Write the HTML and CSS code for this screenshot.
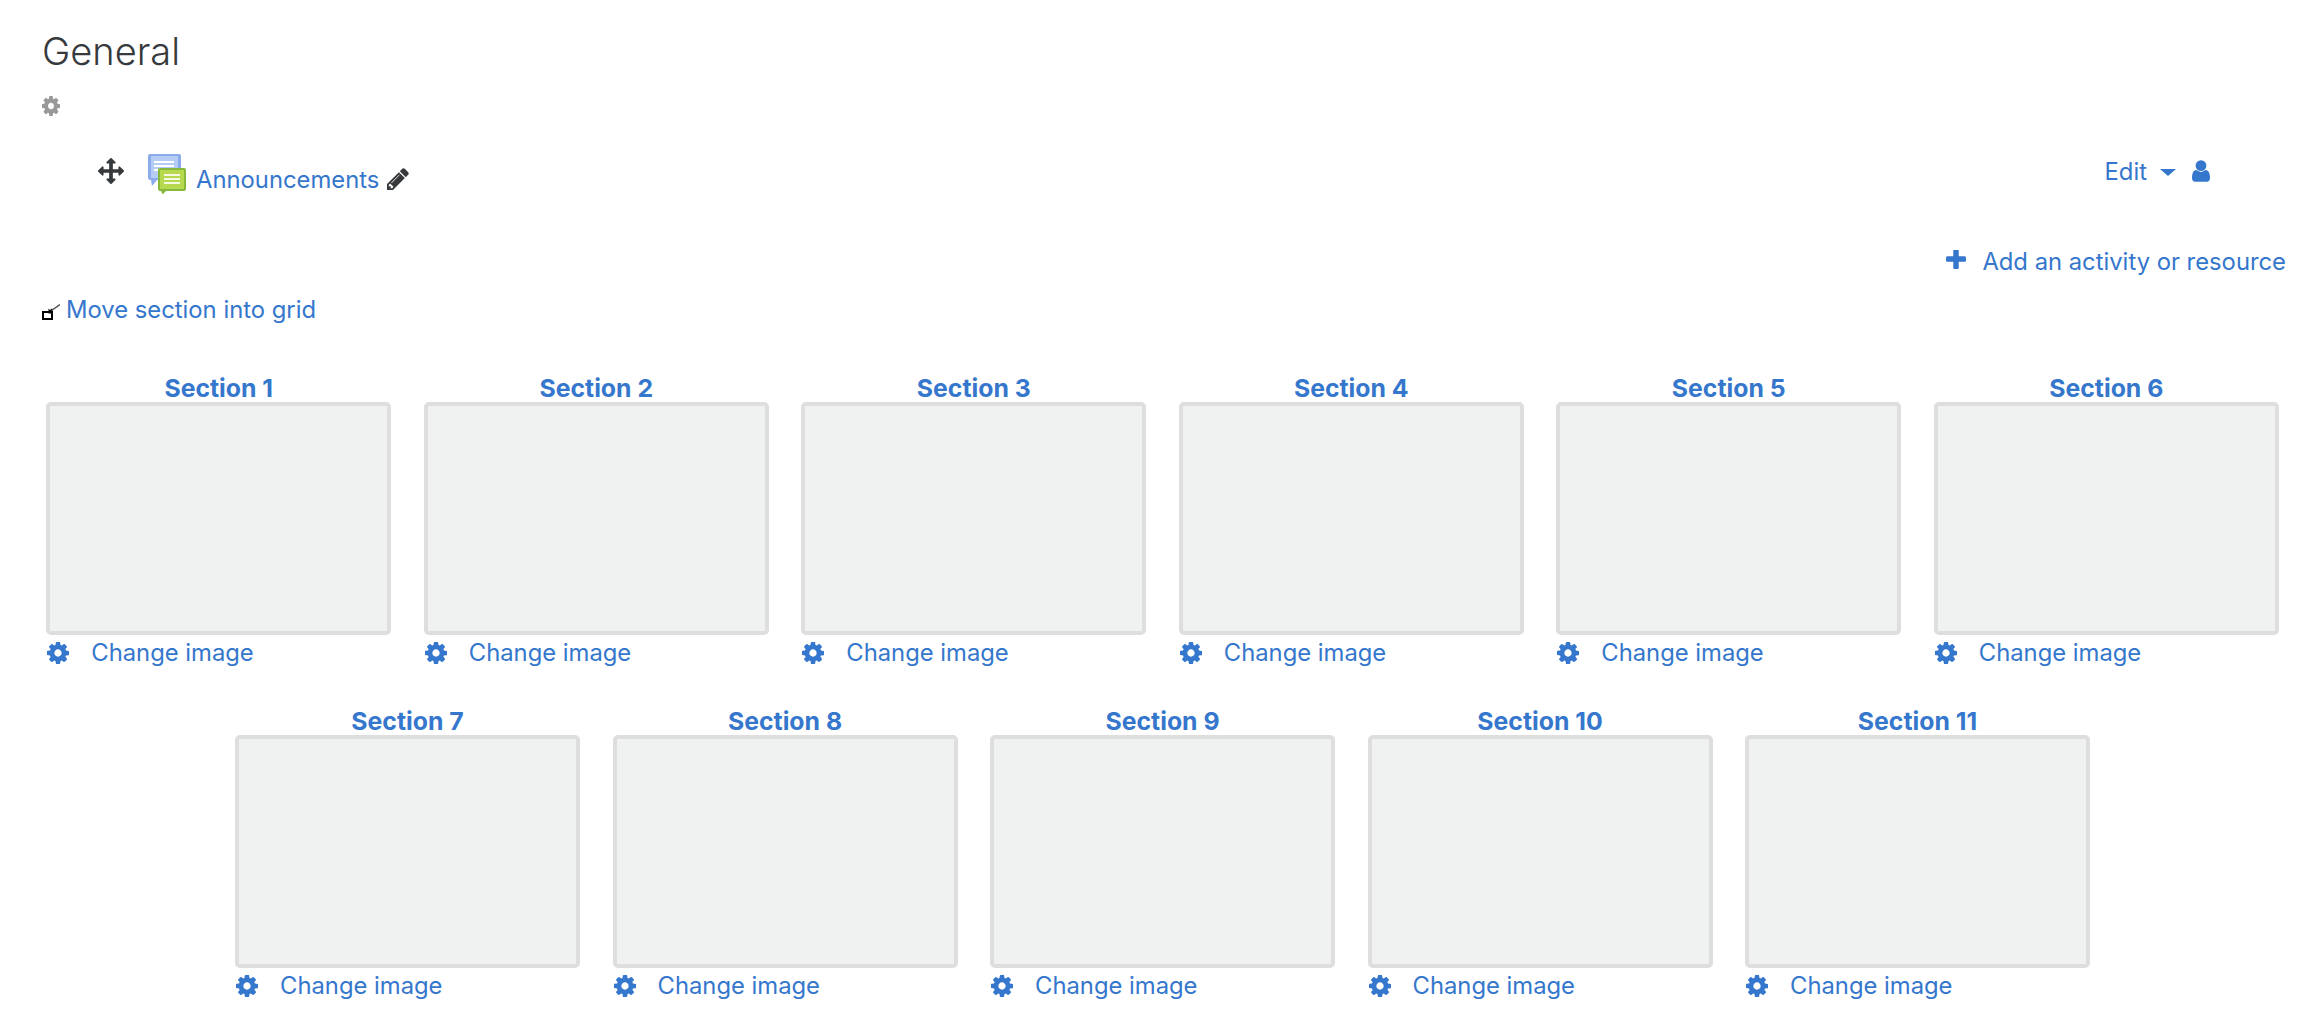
FILE: index.html
```html
<!DOCTYPE html>
<html lang="en">
<head>
<meta charset="utf-8">
<title>General</title>
<link rel="stylesheet" href="styles.css">
</head>
<body>
<svg class="defs" width="0" height="0" aria-hidden="true">
  <symbol id="cog" viewBox="128 128 1536 1536" preserveAspectRatio="none"><path d="M1152 896q0-106-75-181t-181-75-181 75-75 181 75 181 181 75 181-75 75-181zm512-109v222q0 12-8 23t-20 13l-185 28q-19 54-39 91 35 50 107 138 10 12 10 25t-9 23q-27 37-99 108t-94 71q-12 0-26-9l-138-108q-44 23-91 38-16 136-29 186-7 28-36 28h-222q-14 0-24.5-8.5t-11.5-21.5l-28-184q-49-16-90-37l-141 107q-10 9-25 9-14 0-25-11-126-114-165-168-7-10-7-23 0-12 8-23 15-21 51-66.5t54-70.5q-27-50-41-99l-183-27q-13-2-21-12.5t-8-23.5v-222q0-12 8-23t19-13l186-28q14-46 39-92-40-57-107-138-10-12-10-24 0-10 9-23 26-36 98.5-107.5t94.5-71.5q13 0 26 10l138 107q44-23 91-38 16-136 29-186 7-28 36-28h222q14 0 24.5 8.5t11.5 21.5l28 184q49 16 90 37l142-107q9-9 24-9 13 0 25 10 129 119 165 170 7 8 7 22 0 12-8 23-15 21-51 66.5t-54 70.5q26 50 41 98l183 28q13 2 21 12.5t8 23.5z"/></symbol>
</svg>
<main class="page">
  <h1 class="title">General</h1>
  <div class="section-menu"><svg class="icon cog-grey"><use href="#cog"/></svg></div>

  <div class="activity">
    <div class="activity-left">
      <svg class="icon move" viewBox="0 0 1792 1792"><path d="M1792 896q0 26-19 45l-256 256q-19 19-45 19t-45-19-19-45v-128h-384v384h128q26 0 45 19t19 45-19 45l-256 256q-19 19-45 19t-45-19l-256-256q-19-19-19-45t19-45 45-19h128v-384h-384v128q0 26-19 45t-45 19-45-19l-256-256q-19-19-19-45t19-45l256-256q19-19 45-19t45 19 19 45v128h384v-384h-128q-26 0-45-19t-19-45 19-45l256-256q19-19 45-19t45 19l256 256q19 19 19 45t-19 45-45 19h-128v384h384v-128q0-26 19-45t45-19 45 19l256 256q19 19 19 45z"/></svg>
      <svg class="icon forum" viewBox="0 0 38 40">
        <path d="M2 0h29a2 2 0 0 1 2 2v22a2 2 0 0 1-2 2H9l-5 6-1-6H2a2 2 0 0 1-2-2V2a2 2 0 0 1 2-2z" fill="#8cabea"/>
        <path d="M3 2h27v22H3z" fill="#b5cdf5"/>
        <path d="M6 7h20v2H6zM6 11h20v2H6zM6 15h20v2H6z" fill="#fff"/>
        <path d="M12 14h24a2 2 0 0 1 2 2v19a2 2 0 0 1-2 2H18l-3.500 3.500L13 37h-1a2 2 0 0 1-2-2V16a2 2 0 0 1 2-2z" fill="#87b83c"/>
        <path d="M12 16h24v19H12z" fill="#b6d950"/>
        <path d="M16 20h16v2H16zM16 24h16v2H16zM16 28h16v2H16z" fill="#f4f9e0"/>
      </svg>
      <a class="link activity-name">Announcements</a>
      <svg class="icon pencil" viewBox="128 128 1536 1536"><path d="M491 1536l91-91-235-235-91 91v107h128v128h107zm523-928q0-22-22-22-10 0-17 7l-542 542q-7 7-7 17 0 22 22 22 10 0 17-7l542-542q7-7 7-17zm-54-192l416 416-832 832h-416v-416zm683 96q0 53-37 90l-166 166-416-416 166-165q36-38 90-38 53 0 91 38l235 234q37 39 37 91z"/></svg>
    </div>
    <div class="activity-right">
      <a class="link">Edit</a>
      <span class="caret"></span>
      <svg class="icon user" viewBox="256 128 1280 1536"><path d="M1536 1399q0 109-62.500 187t-150.500 78h-854q-88 0-150.500-78t-62.500-187q0-85 8.500-160.500t31.500-152 58.500-131 94-89 134.500-34.500q131 128 313 128t313-128q76 0 134.500 34.500t94 89 58.500 131 31.500 152 8.500 160.500zm-256-887q0 159-112.500 271.500t-271.500 112.500-271.500-112.500-112.500-271.500 112.500-271.500 271.500-112.500 271.500 112.500 112.500 271.500z"/></svg>
    </div>
  </div>

  <div class="add-row">
    <svg class="icon plus" viewBox="192 192 1408 1408"><path d="M1600 736v192q0 40-28 68t-68 28h-416v416q0 40-28 68t-68 28h-192q-40 0-68-28t-28-68v-416h-416q-40 0-68-28t-28-68v-192q0-40 28-68t68-28h416v-416q0-40 28-68t68-28h192q40 0 68 28t28 68v416h416q40 0 68 28t28 68z"/></svg>
    <a class="link">Add an activity or resource</a>
  </div>

  <div class="move-row">
    <svg class="icon into-grid" viewBox="0 0 18 16">
      <path d="M1 8h9v7H1z" fill="#fff" stroke="#000" stroke-width="2"/>
      <path d="M6.500 4.500l1.500 1.500 2-1.500 1 1-1.500 2.500 1.500 1.500H6.500z" fill="#000"/>
      <path d="M9.500 6.500L18 .5" stroke="#555" stroke-width="1.500" fill="none"/>
    </svg>
    <a class="link">Move section into grid</a>
  </div>

  <div class="grid">
    <div class="tile"><a class="tile-title">Section 1</a><div class="tile-box"></div><a class="change"><svg class="icon cog-blue"><use href="#cog"/></svg><span>Change image</span></a></div>
    <div class="tile"><a class="tile-title">Section 2</a><div class="tile-box"></div><a class="change"><svg class="icon cog-blue"><use href="#cog"/></svg><span>Change image</span></a></div>
    <div class="tile"><a class="tile-title">Section 3</a><div class="tile-box"></div><a class="change"><svg class="icon cog-blue"><use href="#cog"/></svg><span>Change image</span></a></div>
    <div class="tile"><a class="tile-title">Section 4</a><div class="tile-box"></div><a class="change"><svg class="icon cog-blue"><use href="#cog"/></svg><span>Change image</span></a></div>
    <div class="tile"><a class="tile-title">Section 5</a><div class="tile-box"></div><a class="change"><svg class="icon cog-blue"><use href="#cog"/></svg><span>Change image</span></a></div>
    <div class="tile"><a class="tile-title">Section 6</a><div class="tile-box"></div><a class="change"><svg class="icon cog-blue"><use href="#cog"/></svg><span>Change image</span></a></div>
    <div class="tile"><a class="tile-title">Section 7</a><div class="tile-box"></div><a class="change"><svg class="icon cog-blue"><use href="#cog"/></svg><span>Change image</span></a></div>
    <div class="tile"><a class="tile-title">Section 8</a><div class="tile-box"></div><a class="change"><svg class="icon cog-blue"><use href="#cog"/></svg><span>Change image</span></a></div>
    <div class="tile"><a class="tile-title">Section 9</a><div class="tile-box"></div><a class="change"><svg class="icon cog-blue"><use href="#cog"/></svg><span>Change image</span></a></div>
    <div class="tile"><a class="tile-title">Section 10</a><div class="tile-box"></div><a class="change"><svg class="icon cog-blue"><use href="#cog"/></svg><span>Change image</span></a></div>
    <div class="tile"><a class="tile-title">Section 11</a><div class="tile-box"></div><a class="change"><svg class="icon cog-blue"><use href="#cog"/></svg><span>Change image</span></a></div>
  </div>
</main>
</body>
</html>
```
FILE: styles.css
```css
* { box-sizing: border-box; }
html, body { margin: 0; padding: 0; background: #fff; }
body {
  width: 2310px;
  height: 1012px;
  overflow: hidden;
  font-family: Inter, "Liberation Sans", sans-serif;
  font-size: 23.8px;
  line-height: 36px;
  color: #3577cc;
}
.defs { position: absolute; }
.page { padding: 26px 24px 0 42px; }
.icon { display: block; flex: none; fill: currentColor; }
.link { color: #3577cc; }

.title {
  margin: 0;
  height: 52px;
  font-size: 38px;
  line-height: 50px;
  font-weight: 300;
  color: #373a3c;
}
.section-menu { height: 26px; margin-top: 18px; }
.cog-grey { width: 18px; height: 20px; margin-top: 2px; color: #999; }

.activity {
  display: flex;
  justify-content: space-between;
  margin-top: 32px;
  height: 50px;
  padding-left: 56px;
  padding-right: 76px;
}
.activity-left { display: flex; align-items: flex-start; }
.move { width: 26px; height: 26px; margin-top: 4px; color: #373a3c; }
.forum { width: 38px; height: 40px; margin-left: 24px; margin-top: 0; }
.activity-name { margin-left: 10px; margin-top: 8px; }
.pencil { width: 22px; height: 22px; margin-left: 8px; margin-top: 14px; color: #373a3c; }
.activity-right { display: flex; align-items: flex-start; margin-top: 0; }
.caret {
  width: 0;
  height: 0;
  margin: 15px 0 0 13px;
  border-left: 8px solid transparent;
  border-right: 8px solid transparent;
  border-top: 7px solid #3577cc;
}
.user { width: 18px; height: 22px; margin: 6px 0 0 16px; }

.add-row {
  display: flex;
  align-items: center;
  justify-content: flex-end;
  margin-top: 40px;
  height: 36px;
}
.plus { width: 20px; height: 20px; margin-right: 16px; margin-top: -4px; }

.move-row {
  display: flex;
  align-items: center;
  margin-top: 12px;
  height: 36px;
}
.into-grid { width: 18px; height: 16px; margin-right: 6px; margin-top: 3px; }

.grid {
  display: flex;
  flex-wrap: wrap;
  justify-content: center;
  column-gap: 32.500px;
  row-gap: 0;
  margin: 42px 0 0 4px;
  width: 2233px;
}
.tile { width: 345px; height: 333px; }
.tile-title {
  display: block;
  height: 32px;
  font-size: 24.800px;
  text-align: center;
  font-weight: 700;
  color: #3577cc;
}
.tile-box {
  height: 233px;
  background: #f0f2f1;
  border: 4px solid #dedede;
  border-radius: 5px;
}
.change { display: flex; align-items: center; height: 36px; color: #3577cc; }
.cog-blue { width: 22px; height: 22px; margin: 0 22px 0 1px; }
```
